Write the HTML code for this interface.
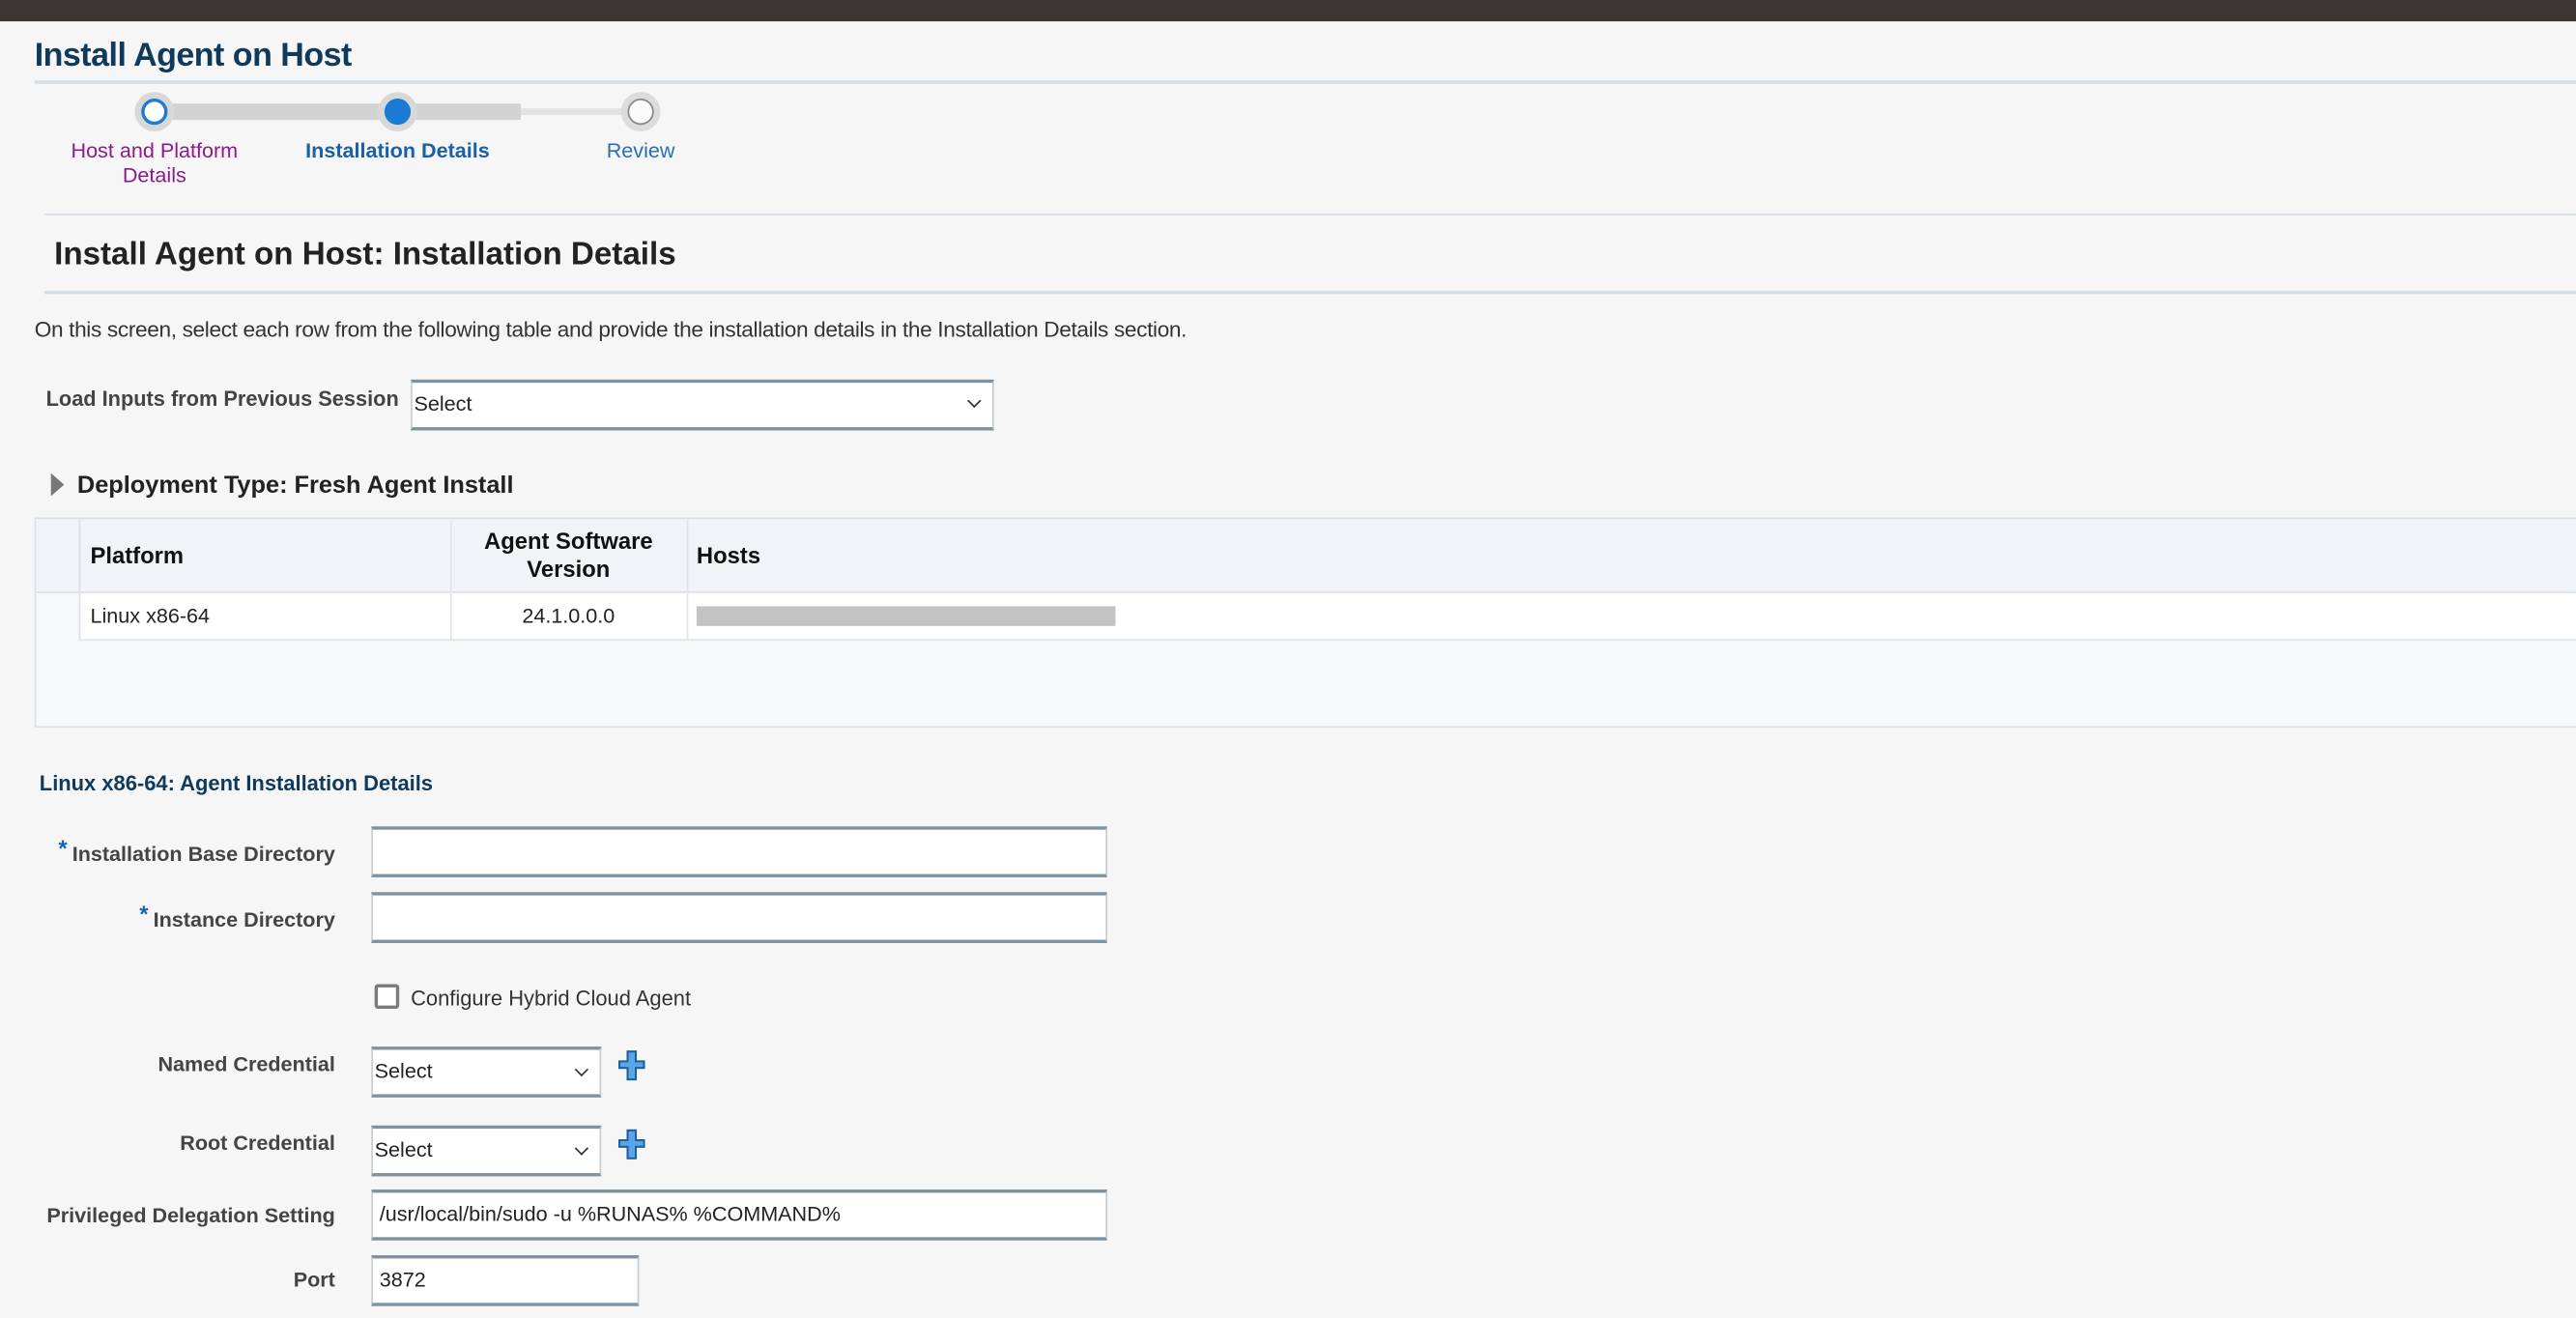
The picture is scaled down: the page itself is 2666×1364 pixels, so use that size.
<!DOCTYPE html>
<html><head><meta charset="utf-8"><style>
html,body{margin:0;padding:0;width:2666px;height:1363px;overflow:hidden;background:#f6f6f6;}
#w{position:absolute;left:0;top:0;width:1568px;height:802px;transform:scale(1.7003);transform-origin:0 0;font-family:"Liberation Sans",Arial,sans-serif;color:#333;}
.a{position:absolute;white-space:nowrap;}
.hl{position:absolute;height:1px;background:#d5dde5;right:0;}
.inp{position:absolute;background:#fff;border:1px solid #c6ccd1;border-top:2px solid #7f939e;border-bottom:2px solid #7f939e;box-sizing:border-box;font-size:12.7px;color:#222;line-height:27px;padding-left:4px;}
.lbl{position:absolute;right:1364px;font-size:12.7px;font-weight:bold;color:#444;white-space:nowrap;}
.star{color:#1a63b0;font-size:14px;position:relative;top:-3px;margin-right:3px;}
.chev{position:absolute;right:8px;top:8px;width:5px;height:5px;border-right:1.3px solid #333;border-bottom:1.3px solid #333;transform:rotate(45deg);}
</style></head><body><div id="w">
<div class="a" style="left:0;top:0;width:1568px;height:13px;background:#3a3632"></div>
<div class="a" style="left:21px;top:23px;font-size:20px;font-weight:bold;color:#0f3a5c;letter-spacing:-0.3px">Install Agent on Host</div>
<div class="hl" style="left:21px;top:49px;height:2px"></div>
<div class="a" style="left:94px;top:63px;width:223px;height:10px;background:#d3d3d3"></div>
<div class="a" style="left:317px;top:66px;width:73px;height:4px;background:#e2e2e2"></div>
<div class="a" style="left:82px;top:56px;width:24px;height:24px;border-radius:50%;background:#d8d8d8"></div>
<div class="a" style="left:86px;top:60px;width:12px;height:12px;border-radius:50%;background:#fff;border:2px solid #1f7ad0"></div>
<div class="a" style="left:230px;top:56px;width:24px;height:24px;border-radius:50%;background:#d8d8d8"></div>
<div class="a" style="left:234px;top:60px;width:16px;height:16px;border-radius:50%;background:#1a7ad4"></div>
<div class="a" style="left:378px;top:56px;width:24px;height:24px;border-radius:50%;background:#dcdcdc"></div>
<div class="a" style="left:382px;top:60px;width:14px;height:14px;border-radius:50%;background:#fafafa;border:1px solid #888"></div>
<div class="a" style="left:34px;top:85px;width:120px;text-align:center;font-size:12.7px;color:#8b1a8b;line-height:15px;white-space:normal">Host and Platform<br>Details</div>
<div class="a" style="left:172px;top:85px;width:140px;text-align:center;font-size:12.7px;font-weight:bold;color:#1a5fa8">Installation Details</div>
<div class="a" style="left:350px;top:85px;width:80px;text-align:center;font-size:12.7px;color:#2a6ebb">Review</div>
<div class="hl" style="left:27px;top:130px"></div>
<div class="a" style="left:33px;top:144px;font-size:19.5px;font-weight:bold;color:#222">Install Agent on Host: Installation Details</div>
<div class="hl" style="left:27px;top:177px;height:2px"></div>
<div class="a" style="left:21px;top:193px;font-size:13.3px;color:#333;letter-spacing:-0.2px">On this screen, select each row from the following table and provide the installation details in the Installation Details section.</div>
<div class="a" style="left:28px;top:235px;font-size:12.8px;font-weight:bold;color:#444">Load Inputs from Previous Session</div>
<div class="inp" style="left:250px;top:231px;width:355px;height:31px;padding-left:1px">Select<div class="chev"></div></div>
<div class="a" style="left:31px;top:288px;width:0;height:0;border-left:8px solid #777;border-top:7px solid transparent;border-bottom:7px solid transparent"></div>
<div class="a" style="left:47px;top:288px;font-size:14.9px;font-weight:bold;color:#222">Deployment Type: Fresh Agent Install</div>
<div class="a" style="left:21px;top:315px;width:1547px;height:128px;background:#f7f8fa;border:1px solid #d8dfe7;box-sizing:border-box;border-right:none"></div>
<div class="a" style="left:22px;top:316px;width:1546px;height:44px;background:#f1f3f6;border-bottom:1px solid #d8dfe7"></div>
<div class="a" style="left:49px;top:361px;width:1519px;height:28px;background:#fff;border-bottom:1px solid #dde3ea"></div>
<div class="a" style="left:48px;top:316px;width:1px;height:74px;background:#d8dfe7"></div>
<div class="a" style="left:274px;top:316px;width:1px;height:74px;background:#e0e5eb"></div>
<div class="a" style="left:418px;top:316px;width:1px;height:74px;background:#e0e5eb"></div>
<div class="a" style="left:55px;top:330px;font-size:14px;font-weight:bold;color:#111">Platform</div>
<div class="a" style="left:274px;top:321px;width:144px;text-align:center;font-size:14px;font-weight:bold;color:#111;line-height:17px;white-space:normal">Agent Software<br>Version</div>
<div class="a" style="left:424px;top:330px;font-size:14px;font-weight:bold;color:#111">Hosts</div>
<div class="a" style="left:55px;top:368px;font-size:12.7px;color:#222">Linux x86-64</div>
<div class="a" style="left:274px;top:368px;width:144px;text-align:center;font-size:12.7px;color:#222">24.1.0.0.0</div>
<div class="a" style="left:424px;top:369px;width:255px;height:12px;background:#c3c3c3"></div>
<div class="a" style="left:24px;top:469px;font-size:12.9px;font-weight:bold;color:#0f3a5c">Linux x86-64: Agent Installation Details</div>
<div class="lbl" style="top:511px"><span class="star">*</span>Installation Base Directory</div>
<div class="inp" style="left:226px;top:503px;width:448px;height:31px"></div>
<div class="lbl" style="top:551px"><span class="star">*</span>Instance Directory</div>
<div class="inp" style="left:226px;top:543px;width:448px;height:31px"></div>
<div class="a" style="left:228px;top:599px;width:11px;height:11px;border:2px solid #7a7a7a;border-radius:2px;background:#fff"></div>
<div class="a" style="left:250px;top:600px;font-size:12.9px;color:#333">Configure Hybrid Cloud Agent</div>
<div class="lbl" style="top:641px">Named Credential</div>
<div class="inp" style="left:226px;top:637px;width:140px;height:31px;padding-left:1px">Select<div class="chev" style="top:9px;border-width:1px"></div></div>
<svg class="a" style="left:376px;top:639px" width="17" height="19" viewBox="0 0 17 19"><path d="M6 1h5v6h5v4h-5v7h-5v-7h-5v-4h5z" fill="#5aa5e8" stroke="#1f5f9e" stroke-width="1.2"/></svg>
<div class="lbl" style="top:689px">Root Credential</div>
<div class="inp" style="left:226px;top:685px;width:140px;height:31px;padding-left:1px">Select<div class="chev" style="top:9px;border-width:1px"></div></div>
<svg class="a" style="left:376px;top:687px" width="17" height="19" viewBox="0 0 17 19"><path d="M6 1h5v6h5v4h-5v7h-5v-7h-5v-4h5z" fill="#5aa5e8" stroke="#1f5f9e" stroke-width="1.2"/></svg>
<div class="lbl" style="top:733px">Privileged Delegation Setting</div>
<div class="inp" style="left:226px;top:724px;width:448px;height:31px">/usr/local/bin/sudo -u %RUNAS% %COMMAND%</div>
<div class="lbl" style="top:772px">Port</div>
<div class="inp" style="left:226px;top:764px;width:163px;height:31px">3872</div>
</div></body></html>
